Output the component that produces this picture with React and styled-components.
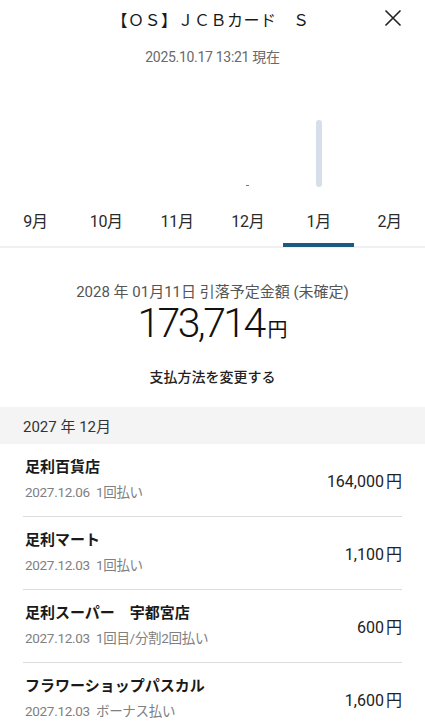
import React from 'react';
import styled, {createGlobalStyle} from 'styled-components';

const months = ['9月', '10月', '11月', '12月', '1月', '2月'];
const activeMonth = 4;

const items = [
    {name: '足利百貨店', date: '2027.12.06', kind: '1回払い', amount: '164,000'},
    {name: '足利マート', date: '2027.12.03', kind: '1回払い', amount: '1,100'},
    {name: '足利スーパー　宇都宮店', date: '2027.12.03', kind: '1回目/分割2回払い', amount: '600'},
    {name: 'フラワーショップパスカル', date: '2027.12.03', kind: 'ボーナス払い', amount: '1,600'},
];

export default function App() {
    return (
        <Page>
            <GlobalStyle/>
            <Header>
                <Title>【ＯＳ】ＪＣＢカード　Ｓ</Title>
                <CloseButton aria-label="close">
                    <svg width="18" height="18" viewBox="0 0 18 18">
                        <path d="M1.5 1.5 L16.5 16.5 M16.5 1.5 L1.5 16.5" stroke="#222" strokeWidth="1.6" fill="none"/>
                    </svg>
                </CloseButton>
            </Header>
            <Stamp>2025.10.17 13:21 現在</Stamp>
            <Chart>
                {months.map((m, i) => (
                    <ChartSlot key={m}>
                        {i === 3 && <Tick/>}
                        {i === 4 && <Bar/>}
                    </ChartSlot>
                ))}
            </Chart>
            <Tabs>
                {months.map((m, i) => (
                    <Tab key={m} $active={i === activeMonth}>{m}</Tab>
                ))}
            </Tabs>
            <Summary>
                <DueLine>2028 年 01月11日 引落予定金額 (未確定)</DueLine>
                <Total>173,714<Yen>円</Yen></Total>
                <ChangeLink>支払方法を変更する</ChangeLink>
            </Summary>
            <MonthHeader>2027 年 12月</MonthHeader>
            <List>
                {items.map(item => (
                    <Row key={item.name}>
                        <RowText>
                            <Shop>{item.name}</Shop>
                            <Meta>{item.date}&nbsp; {item.kind}</Meta>
                        </RowText>
                        <Amount>{item.amount}<AmountYen>円</AmountYen></Amount>
                    </Row>
                ))}
            </List>
        </Page>
    );
}

const GlobalStyle = createGlobalStyle`
  html, body {
    margin: 0;
    padding: 0;
    background: #fff;
  }
  * {
    box-sizing: border-box;
  }
`;

const Page = styled.div`
  width: 425px;
  height: 727px;
  overflow: hidden;
  background: #fff;
  font-family: Roboto, 'Noto Sans CJK JP', sans-serif;
  color: #222;
`;

const Header = styled.div`
  height: 38px;
  display: flex;
  align-items: center;
  justify-content: center;
  position: relative;
`;

const Title = styled.div`
  font-size: 16px;
  letter-spacing: 0.5px;
  color: #1a1a1a;
  margin-left: -4px;
`;

const CloseButton = styled.div`
  position: absolute;
  right: 23px;
  top: 9px;
  width: 18px;
  height: 18px;
  display: flex;
`;

const Stamp = styled.div`
  text-align: center;
  font-size: 14px;
  color: #6a6a6a;
  letter-spacing: -0.3px;
  margin-top: 9px;
  line-height: 20px;
`;

const Chart = styled.div`
  height: 123px;
  display: grid;
  grid-template-columns: repeat(6, 1fr);
  padding-bottom: 3px;
`;

const ChartSlot = styled.div`
  display: flex;
  justify-content: center;
  align-items: flex-end;
`;

const Bar = styled.div`
  width: 6px;
  height: 67px;
  border-radius: 3px;
  background: #d6dee9;
`;

const Tick = styled.div`
  width: 3px;
  height: 1.5px;
  background: #777;
  margin-bottom: 1px;
`;

const Tabs = styled.div`
  display: grid;
  grid-template-columns: repeat(6, 1fr);
  border-bottom: 2px solid #eef0f3;
`;

const Tab = styled.div`
  height: 57px;
  display: flex;
  align-items: center;
  justify-content: center;
  padding-top: 7px;
  font-size: 16px;
  color: #2a2a2a;
  letter-spacing: -0.3px;
  border-bottom: 4px solid ${p => (p.$active ? '#1d5a80' : 'transparent')};
  margin-bottom: -1px;
`;

const Summary = styled.div`
  display: flex;
  flex-direction: column;
  align-items: center;
  padding-top: 34px;
  height: 159px;
`;

const DueLine = styled.div`
  font-size: 15px;
  color: #555;
  line-height: 20px;
`;

const Total = styled.div`
  font-size: 41px;
  font-weight: 300;
  line-height: 42px;
  letter-spacing: -2.6px;
  color: #111;
`;

const Yen = styled.span`
  font-size: 20px;
  font-weight: 400;
  letter-spacing: 0;
  margin-left: 4px;
`;

const ChangeLink = styled.div`
  font-size: 14px;
  font-weight: 500;
  color: #222;
  margin-top: 15px;
`;

const MonthHeader = styled.div`
  height: 37px;
  background: #f4f4f4;
  display: flex;
  align-items: center;
  padding-left: 23px;
  font-size: 15px;
  color: #333;
`;

const List = styled.div`
  padding: 0 23px;
`;

const Row = styled.div`
  height: 73px;
  display: flex;
  align-items: center;
  justify-content: space-between;
  border-bottom: 1.5px solid #dcdcdc;
  padding: 0 0 2px 2px;
`;

const RowText = styled.div`
  display: flex;
  flex-direction: column;
  gap: 5px;
`;

const Shop = styled.div`
  font-size: 15px;
  font-weight: 700;
  color: #1a1a1a;
  line-height: 20px;
`;

const Meta = styled.div`
  font-size: 13.5px;
  color: #808080;
  letter-spacing: -0.3px;
  line-height: 20px;
`;

const Amount = styled.div`
  font-size: 16px;
  color: #222;
  margin-top: 2px;
`;

const AmountYen = styled.span`
  margin-left: 2px;
`;
